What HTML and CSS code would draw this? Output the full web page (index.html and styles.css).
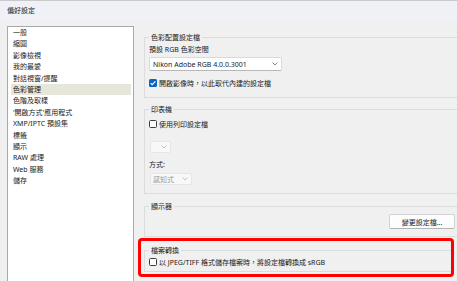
FILE: index.html
```html
<!DOCTYPE html>
<html lang="zh-Hant">
<head>
  <meta charset="UTF-8">
  <meta name="viewport" content="width=device-width, initial-scale=1.0">
  <title>偏好設定</title>
  <link rel="stylesheet" href="styles.css">
</head>
<body>

  <!-- Window title -->
  <div class="titlebar">偏好設定</div>

  <div class="main">
    <!-- Category list -->
    <ul class="nav">
      <li>一般</li>
      <li>縮圖</li>
      <li>影像檢視</li>
      <li>我的最愛</li>
      <li>對話視窗/提醒</li>
      <li class="active">色彩管理</li>
      <li>色階及取樣</li>
      <li>'開啟方式'應用程式</li>
      <li>XMP/IPTC 預設集</li>
      <li>標籤</li>
      <li>顯示</li>
      <li>RAW 處理</li>
      <li>Web 服務</li>
      <li>儲存</li>
    </ul>

    <!-- Settings panes -->
    <div class="panes">
      <section class="group group-profile">
        <div class="group-title">色彩配置設定檔</div>
        <div class="field-label">預設 RGB 色彩空間</div>
        <div class="select select-wide">
          <span>Nikon Adobe RGB 4.0.0.3001</span>
          <svg class="chevron" width="6" height="4" viewBox="0 0 6 4"><polyline points="0.5,0.5 3,3 5.5,0.5"/></svg>
        </div>
        <div class="check">
          <span class="box checked"><svg width="8" height="8" viewBox="0 0 8 8"><polyline points="1.6,4.1 3.2,5.7 6.4,2.3"/></svg></span>
          開啟影像時，以此取代內建的設定檔
        </div>
      </section>

      <section class="group group-printer">
        <div class="group-title">印表機</div>
        <div class="check">
          <span class="box"></span>
          使用列印設定檔
        </div>
        <div class="select disabled select-tiny">
          <span></span>
          <svg class="chevron" width="6" height="4" viewBox="0 0 6 4"><polyline points="0.5,0.5 3,3 5.5,0.5"/></svg>
        </div>
        <div class="field-label intent-label">方式:</div>
        <div class="select disabled select-intent">
          <span>感知式</span>
          <svg class="chevron" width="6" height="4" viewBox="0 0 6 4"><polyline points="0.5,0.5 3,3 5.5,0.5"/></svg>
        </div>
      </section>

      <section class="group group-monitor">
        <div class="group-title">顯示器</div>
        <button class="btn">變更設定檔...</button>
      </section>

      <!-- highlighted section -->
      <div class="highlight">
        <section class="group group-convert">
          <div class="group-title">檔案轉換</div>
          <div class="check">
            <span class="box"></span>
            以 JPEG/TIFF 格式儲存檔案時，將設定檔轉換成 sRGB
          </div>
        </section>
      </div>
    </div>
  </div>

</body>
</html>
```

FILE: styles.css
```css
* {
  box-sizing: border-box;
}
body {
  margin: 0;
  width: 457px;
  height: 281px;
  overflow: hidden;
  background-color: #f0f0f0;
  font-family: "Noto Sans", "Noto Sans CJK TC", sans-serif;
  font-size: 7px;
  color: #1b1b1b;
}
.titlebar {
  height: 20px;
  padding-left: 7px;
  line-height: 19px;
  border-top: 1px solid #c9c9c9;
  background-color: #eff1f7;
}
.main {
  display: flex;
  gap: 10px;
  padding: 6px 0 0 7px;
}

/* Category list */
.nav {
  list-style: none;
  margin: 0;
  padding: 0;
  width: 127px;
  height: 255px;
  flex-shrink: 0;
  background-color: #fff;
  border: 1px solid #a9a9a9;
  border-bottom: none;
}
.nav li {
  height: 11.4px;
  line-height: 11.4px;
  margin: 0 2px 0 3px;
  padding-left: 2px;
  white-space: nowrap;
}
.nav li.active {
  background-color: #e6e6da;
}

/* Group boxes */
.panes {
  width: 319px;
  flex-shrink: 0;
  padding-top: 11px;
}
.group {
  border: 1px solid #dcdcdc;
  padding: 0 7px 9px 4px;
}
.group-title {
  width: fit-content;
  margin-top: -6px;
  padding: 0 2px;
  line-height: 11px;
  background-color: #f0f0f0;
}
.group-printer {
  margin-top: 11px;
  padding-bottom: 8px;
}
.group-monitor {
  margin-top: 12px;
  padding-bottom: 7px;
}
.field-label {
  margin-top: 2px;
  line-height: 10px;
}
.intent-label {
  margin-top: 7px;
}

/* Dropdowns */
.select {
  display: flex;
  align-items: center;
  justify-content: space-between;
  height: 14px;
  padding: 0 3px 0 3px;
  background-color: #fff;
  border: 1px solid #dadada;
  border-bottom-color: #b8b8b8;
  border-radius: 2px;
  white-space: nowrap;
}
.select-wide {
  width: 133px;
  margin-top: 2px;
}
.chevron polyline {
  fill: none;
  stroke: #6a6a6a;
  stroke-width: 0.8;
}
.select.disabled {
  height: 12px;
  margin-left: 1px;
  padding-left: 2px;
  background-color: #f8f8f8;
  border-color: #e6e6e6;
  color: #9b9b9b;
}
.select.disabled .chevron polyline {
  stroke: #b4b4b4;
}
.select-tiny {
  width: 21px;
  margin-top: 12px;
  padding-right: 3px;
}
.select-intent {
  width: 42px;
  margin-top: 3px;
}

/* Checkboxes */
.check {
  display: flex;
  align-items: center;
  gap: 2px;
  height: 10px;
  margin-top: 7px;
  white-space: nowrap;
}
.group-printer .check {
  margin-top: 4px;
}
.box {
  display: inline-block;
  width: 8px;
  height: 8px;
  flex-shrink: 0;
  border: 1px solid #3c3c3c;
  border-radius: 1.5px;
  background-color: #fbfbfb;
}
.box.checked {
  border: none;
  background-color: #0a64c8;
}
.box.checked svg {
  display: block;
}
.box.checked polyline {
  fill: none;
  stroke: #fff;
  stroke-width: 1.1;
}

/* Button */
.btn {
  display: block;
  width: 66px;
  height: 15px;
  margin: 2px 0 0 auto;
  padding: 0;
  font-family: inherit;
  font-size: 7px;
  color: #1b1b1b;
  background-color: #fdfdfd;
  border: 1px solid #d2d2d2;
  border-bottom-color: #b5b5b5;
  border-radius: 2px;
}

/* Red annotation frame */
.highlight {
  width: 316px;
  margin: 1px 0 0 -6px;
  padding: 0 0 2px 3px;
  border: 3px solid #f00;
  border-radius: 4px;
  overflow: hidden;
}
.group-convert {
  width: 319px;
  margin-top: 9px;
  padding-bottom: 4px;
}
.group-convert .check {
  margin-top: 1px;
}
```
